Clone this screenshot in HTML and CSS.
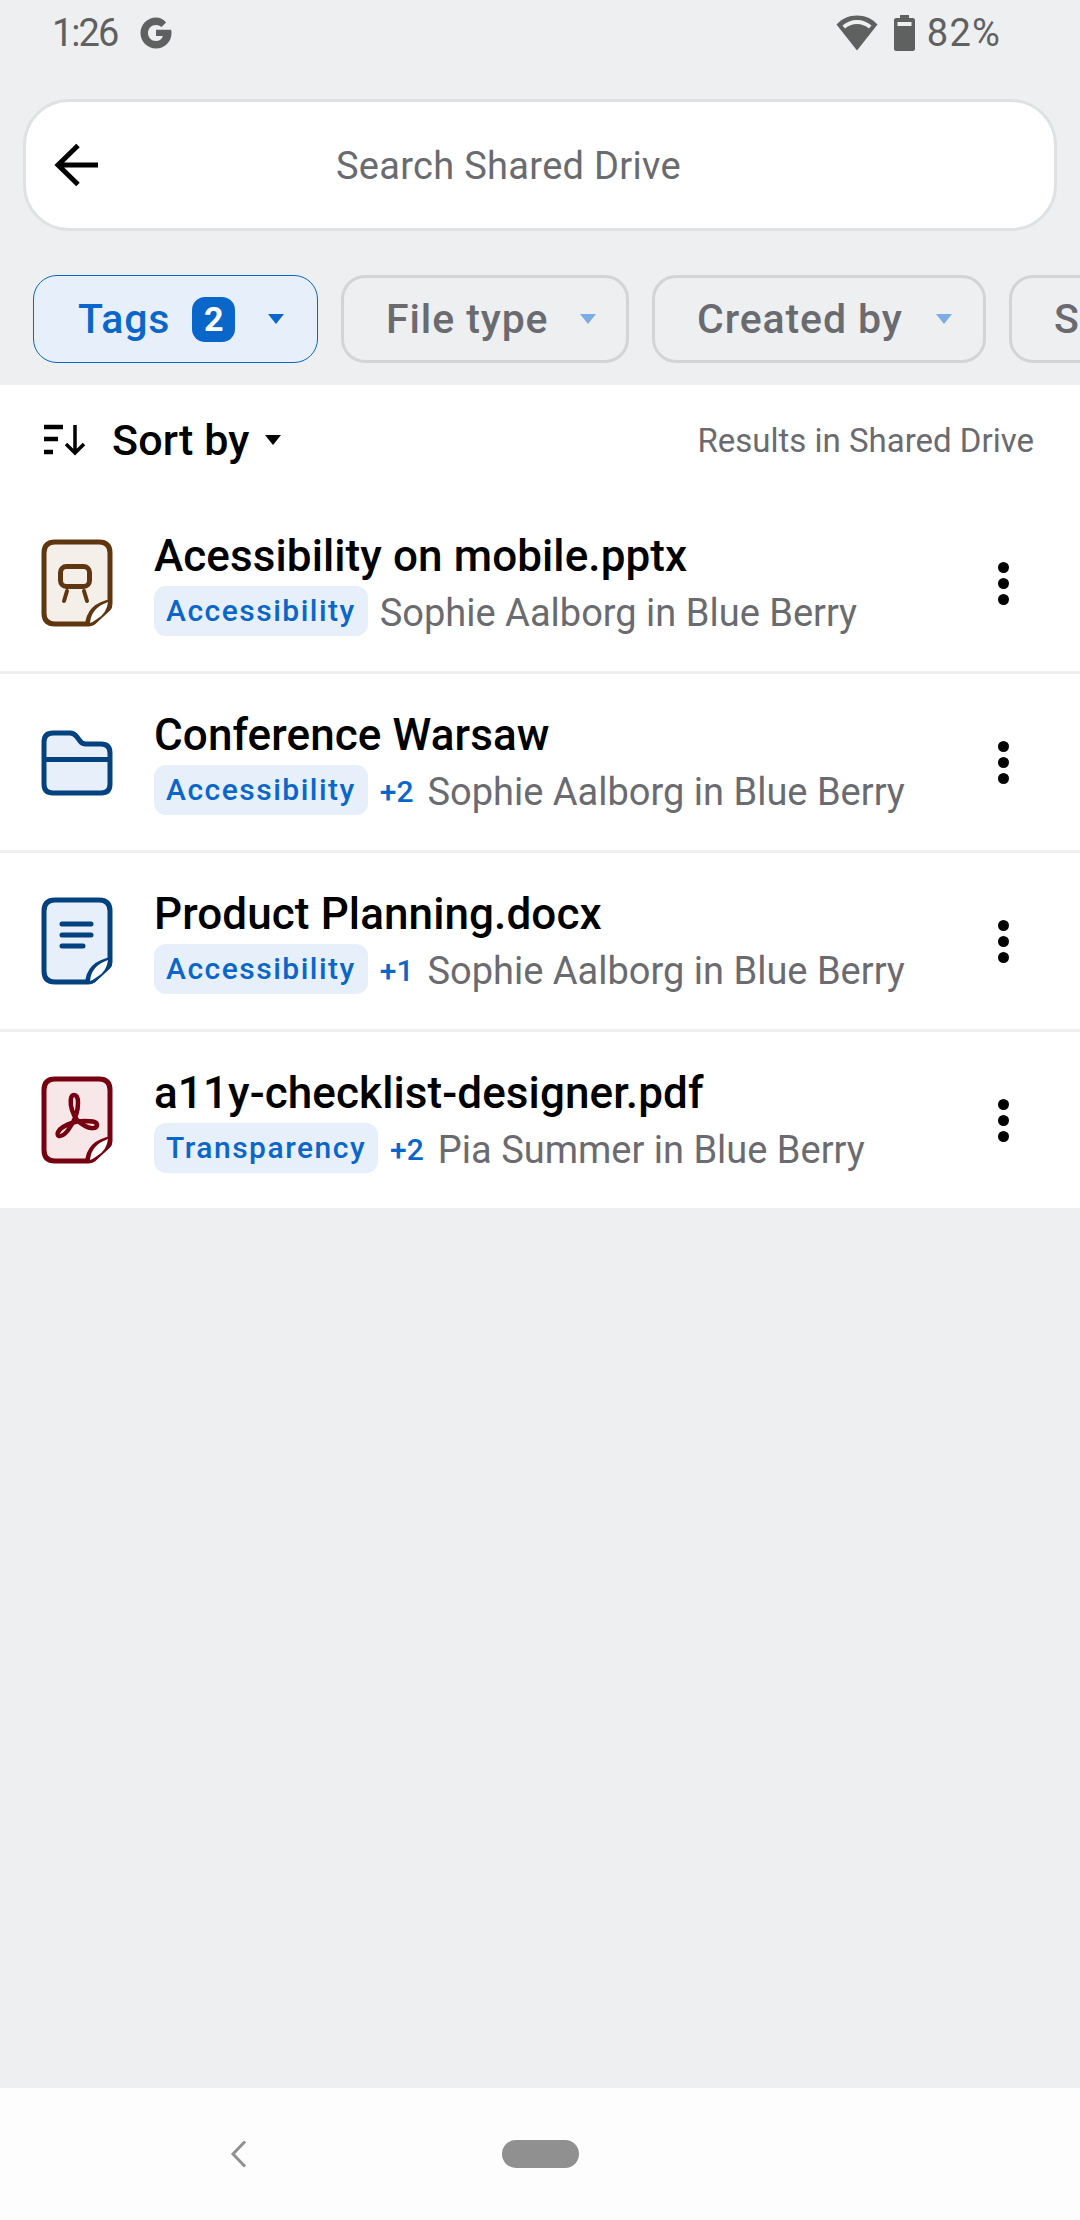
FILE: index.html
```html
<!DOCTYPE html>
<html lang="en">
<head>
<meta charset="utf-8">
<title>Search Shared Drive</title>
<link rel="stylesheet" href="styles.css">
</head>
<body>
<div class="page">
  <header class="status">
    <div class="status-side">
      <span class="status-text time">1:26</span>
      <svg class="g-logo" viewBox="0 0 34 34"><path d="M29 13.8H17v6.200h6.900c-1 3.200-3.600 5-6.900 5-4.500 0-8-3.500-8-8s3.500-8 8-8c2.100 0 4 .8 5.500 2.100l4.500-4.500C24.400 3.200 20.900 1.500 17 1.500 8.400 1.500 1.500 8.400 1.500 17S8.400 32.500 17 32.500c8.200 0 15.500-6 15.500-15.500 0-1.100-.1-2.200-.4-3.200z" fill="#5f6160"/></svg>
    </div>
    <div class="status-side">
      <svg class="wifi" viewBox="0 0 42 36"><path d="M21 .5C13 .5 6 3.500 .5 9.500L21 35.500 41.500 9.500C36 3.500 29 .5 21 .5z" fill="#5f6160"/><path d="M6.500 10.500C10.500 7 15.500 5 21 5s10.500 2 14.500 5.500l-2.500 3C29.500 10.500 25.500 9 21 9s-8.500 1.500-12 4.500z" fill="#eeeff1"/></svg>
      <svg class="battery" viewBox="0 0 21 36"><path d="M6 0h9v3h4c1 0 2 1 2 2v29c0 1-1 2-2 2H2c-1 0-2-1-2-2V5c0-1 1-2 2-2h4z" fill="#5f6160"/><rect x="3.500" y="7" width="14" height="4" fill="#eeeff1"/></svg>
      <span class="status-text percent">82%</span>
    </div>
  </header>

  <div class="search">
    <svg class="back" viewBox="0 0 46 44"><path d="M44 22H5M24 2.500 4 22l20 19.500" fill="none" stroke="#000" stroke-width="5"/></svg>
    <span class="search-text">Search Shared Drive</span>
  </div>

  <nav class="chips">
    <div class="chip chip-active">
      <span>Tags</span>
      <span class="badge">2</span>
      <span class="caret caret-tags"></span>
    </div>
    <div class="chip chip-file"><span>File type</span><span class="caret caret-file"></span></div>
    <div class="chip chip-created"><span>Created by</span><span class="caret"></span></div>
    <div class="chip chip-more"><span>Shared</span></div>
  </nav>

  <main class="results">
    <div class="sort-bar">
      <div class="sort">
        <svg class="sort-icon" viewBox="0 0 42 32"><path d="M0 3h19M0 15h14M0 28h9" stroke="#000" stroke-width="4.500" fill="none"/><path d="M31 1v28M22 20l9 9 9-9" stroke="#000" stroke-width="3.500" fill="none"/></svg>
        <span class="sort-label">Sort by</span>
        <span class="caret caret-black"></span>
      </div>
      <span class="results-in">Results in Shared Drive</span>
    </div>

    <article class="row">
      <svg class="file-icon icon-brown" viewBox="0 0 72 88">
        <path class="sheet" d="M14 3H58Q69 3 69 14V65Q69 68 67 70L54 82Q51 85 47 85H14Q3 85 3 74V14Q3 3 14 3Z"/>
        <path class="fold" d="M44 87Q45 64 71 60V66Q71 69 69 71L55 84Q52 87 47 87Z"/>
        <path class="leaf" d="M49 84Q50 69 67 63Q66 74 56 80Q52 83 49 84Z"/>
        <rect class="line" x="19.500" y="27.500" width="29" height="20" rx="6"/>
        <path class="line round thin" d="M26 52 23 62M43 52 46 62"/>
      </svg>
      <div class="row-text">
        <div class="title">Acessibility on mobile.pptx</div>
        <div class="meta"><span class="tag">Accessibility</span><span class="owner">Sophie Aalborg in Blue Berry</span></div>
      </div>
      <div class="kebab"><i></i><i></i><i></i></div>
    </article>

    <article class="row">
      <svg class="file-icon icon-blue" viewBox="0 0 72 88">
        <path class="sheet" d="M12 15H29Q33 15 36 19L39 23Q41 26 45 26H60Q69 26 69 35V66Q69 75 60 75H12Q3 75 3 66V24Q3 15 12 15Z"/>
        <path class="line" d="M3 41.500H69"/>
      </svg>
      <div class="row-text">
        <div class="title">Conference Warsaw</div>
        <div class="meta"><span class="tag">Accessibility</span><span class="more">+2</span><span class="owner">Sophie Aalborg in Blue Berry</span></div>
      </div>
      <div class="kebab"><i></i><i></i><i></i></div>
    </article>

    <article class="row">
      <svg class="file-icon icon-blue" viewBox="0 0 72 88">
        <path class="sheet" d="M14 3H58Q69 3 69 14V65Q69 68 67 70L54 82Q51 85 47 85H14Q3 85 3 74V14Q3 3 14 3Z"/>
        <path class="fold" d="M44 87Q45 64 71 60V66Q71 69 69 71L55 84Q52 87 47 87Z"/>
        <path class="leaf" d="M49 84Q50 69 67 63Q66 74 56 80Q52 83 49 84Z"/>
        <path class="line round" d="M21 27H50M21 38H50M21 49H42"/>
      </svg>
      <div class="row-text">
        <div class="title">Product Planning.docx</div>
        <div class="meta"><span class="tag">Accessibility</span><span class="more">+1</span><span class="owner">Sophie Aalborg in Blue Berry</span></div>
      </div>
      <div class="kebab"><i></i><i></i><i></i></div>
    </article>

    <article class="row row-last">
      <svg class="file-icon icon-red" viewBox="0 0 72 88">
        <path class="sheet" d="M14 3H58Q69 3 69 14V65Q69 68 67 70L54 82Q51 85 47 85H14Q3 85 3 74V14Q3 3 14 3Z"/>
        <path class="fold" d="M44 87Q45 64 71 60V66Q71 69 69 71L55 84Q52 87 47 87Z"/>
        <path class="leaf" d="M49 84Q50 69 67 63Q66 74 56 80Q52 83 49 84Z"/>
        <path class="acrobat" d="M33 19C29 19 29 28 31 34 33 41 38 47 44 50 49 53 56 53 56 49 56 45 49 45 43 45 35 45 27 48 22 51 17 54 15 59 18 60 22 61 27 55 31 48 35 41 37 33 37 27 37 22 36 19 33 19Z"/>
      </svg>
      <div class="row-text">
        <div class="title">a11y-checklist-designer.pdf</div>
        <div class="meta"><span class="tag">Transparency</span><span class="more">+2</span><span class="owner">Pia Summer in Blue Berry</span></div>
      </div>
      <div class="kebab"><i></i><i></i><i></i></div>
    </article>
  </main>

  <div class="spacer"></div>

  <footer class="navbar">
    <svg class="nav-back" viewBox="0 0 17 28"><path d="M15 1.500 3 14l12 12.500" fill="none" stroke="#909090" stroke-width="3"/></svg>
    <span class="nav-pill"></span>
  </footer>
</div>
</body>
</html>
```

FILE: styles.css
```css
* { box-sizing: border-box; }
html, body { margin: 0; padding: 0; }
body {
  width: 1080px;
  height: 2220px;
  overflow: hidden;
  background: #eeeff1;
  font-family: Roboto, "Noto Sans", sans-serif;
}
.page {
  width: 1080px;
  height: 2220px;
  display: flex;
  flex-direction: column;
}

/* status bar */
.status {
  height: 99px;
  flex: none;
  padding: 14px 79px 0 52px;
  display: flex;
  justify-content: space-between;
  align-items: flex-start;
}
.status-side { display: flex; align-items: center; height: 38px; }
.status-text { font-size: 38px; line-height: 38px; color: #5f6160; }
.time { letter-spacing: -2px; }
.percent { letter-spacing: 1.200px; }
.g-logo { width: 34px; height: 34px; margin-left: 22px; }
.wifi { width: 42px; height: 36px; margin-right: 16px; }
.battery { width: 21px; height: 36px; margin-right: 12px; }

/* search */
.search {
  flex: none;
  height: 132px;
  margin: 0 23px;
  background: #fff;
  border: 3px solid #dfe1e4;
  border-radius: 46px;
  display: flex;
  align-items: center;
  padding-left: 28px;
}
.back { width: 46px; height: 44px; flex: none; }
.search-text {
  margin-left: 236px;
  padding-top: 2px;
  font-size: 38px;
  letter-spacing: .3px;
  color: #6a6b70;
  white-space: nowrap;
}

/* filter chips */
.chips {
  flex: none;
  height: 154px;
  padding: 44px 0 22px 33px;
  display: flex;
  gap: 23px;
  overflow: hidden;
}
.chip {
  flex: none;
  height: 88px;
  border: 3px solid #d3d4d6;
  border-radius: 24px;
  display: flex;
  align-items: center;
  padding: 0 42px;
  font-size: 41px;
  font-weight: 500;
  letter-spacing: .9px;
  color: #6a6b70;
  white-space: nowrap;
}
.chip-active {
  width: 285px;
  border: 1.500px solid #0a66c8;
  background: #e7effa;
  color: #0a66c8;
  padding: 0 0 0 44px;
}
.chip-file { width: 288px; }
.chip-created { width: 334px; }
.badge {
  width: 43px;
  height: 45px;
  margin-left: 22px;
  border-radius: 13px;
  background: #0a66c8;
  color: #fff;
  font-size: 34px;
  font-weight: 700;
  letter-spacing: 0;
  line-height: 45px;
  text-align: center;
}
.caret {
  flex: none;
  width: 0;
  height: 0;
  margin-left: 33px;
  border-left: 8px solid transparent;
  border-right: 8px solid transparent;
  border-top: 10px solid #7aaee3;
}
.caret-tags { margin-left: 33px; border-top-color: #0a66c8; }
.caret-file { margin-left: 32px; }
.caret-black { margin-left: 16px; border-top-color: #000; }

/* results */
.results { flex: none; background: #fff; }
.sort-bar {
  height: 110px;
  padding: 0 46px 0 44px;
  display: flex;
  align-items: center;
  justify-content: space-between;
}
.sort { display: flex; align-items: center; }
.sort-icon { width: 42px; height: 32px; }
.sort-label {
  margin-left: 26px;
  font-size: 43px;
  font-weight: 500;
  letter-spacing: .1px;
  color: #000;
}
.results-in { font-size: 33px; color: #6a6b70; }

.row {
  height: 179px;
  padding-left: 41px;
  border-bottom: 3px solid #eeeff0;
  display: flex;
  align-items: center;
}
.row-last { height: 176px; border-bottom: 0; }
.file-icon { width: 72px; height: 88px; flex: none; }
.row-text { margin-left: 41px; flex: 1; min-width: 0; }
.title {
  padding-top: 2px;
  font-size: 44px;
  line-height: 48px;
  font-weight: 500;
  letter-spacing: .1px;
  color: #000;
  white-space: nowrap;
}
.meta { display: flex; align-items: center; margin-top: 6px; height: 50px; white-space: nowrap; }
.tag {
  height: 50px;
  padding: 0 12px;
  border-radius: 12px;
  background: #e7effa;
  color: #0a66c8;
  font-size: 30px;
  font-weight: 500;
  letter-spacing: 1.500px;
  line-height: 50px;
}
.more {
  margin-left: 12px;
  margin-right: 2px;
  padding-top: 3px;
  font-size: 30px;
  font-weight: 500;
  color: #0a66c8;
}
.owner { margin-left: 12px; padding-top: 3px; font-size: 38px; color: #6a6b70; }

.kebab {
  width: 11px;
  margin-right: 71px;
  display: flex;
  flex-direction: column;
  gap: 5px;
}
.kebab i { width: 11px; height: 11px; border-radius: 50%; background: #000; display: block; }

/* icon colours */
.sheet { stroke-width: 5; }
.line { fill: none; stroke-width: 5; }
.thin { stroke-width: 4; }
.round { stroke-linecap: round; }
.leaf { fill: #fff; }
.acrobat { fill: none; stroke-width: 4.500; }
.icon-brown .sheet { fill: #f5efe9; stroke: #5f3610; }
.icon-brown .fold { fill: #5f3610; }
.icon-brown .line { stroke: #5f3610; }
.icon-blue .sheet { fill: #e7effa; stroke: #03427f; }
.icon-blue .fold { fill: #03427f; }
.icon-blue .line { stroke: #03427f; }
.icon-red .sheet { fill: #f8e7e9; stroke: #760010; }
.icon-red .fold { fill: #760010; }
.icon-red .acrobat { stroke: #760010; }

.spacer { flex: 1; }

/* navigation bar */
.navbar {
  flex: none;
  height: 132px;
  background: #fdfdfd;
  display: flex;
  align-items: center;
  padding-left: 230px;
}
.nav-back { width: 17px; height: 28px; flex: none; }
.nav-pill {
  width: 77px;
  height: 28px;
  margin-left: 255px;
  border-radius: 14px;
  background: #909090;
}
```
